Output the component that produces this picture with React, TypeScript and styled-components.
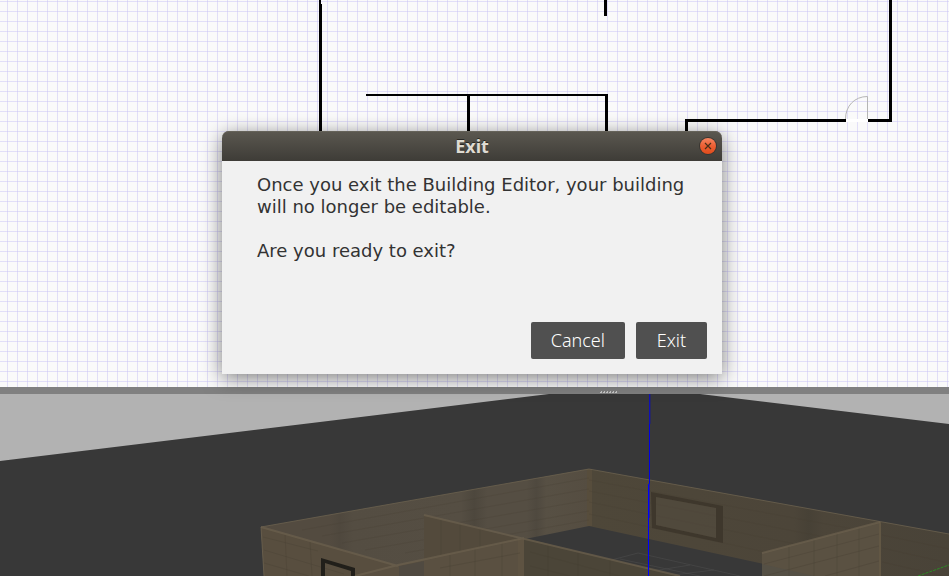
import React from "react";
import styled, { createGlobalStyle } from "styled-components";

const GlobalStyle = createGlobalStyle`
  * { box-sizing: border-box; }
  html, body, #root { height: 100%; margin: 0; }
  body { overflow: hidden; font-family: "DejaVu Sans", sans-serif; }
`;

const Editor = styled.main`
  position: relative;
  display: grid;
  grid-template-rows: minmax(0, 387fr) 7px minmax(0, 182fr);
  height: 100vh;
`;

const PlanPane = styled.section`
  min-height: 0;
  background-color: #fafafa;
  background-image:
    linear-gradient(to right, rgba(205, 200, 245, 0.55) 1px, transparent 1px),
    linear-gradient(to bottom, rgba(205, 200, 245, 0.55) 1px, transparent 1px);
  background-size: 10px 10px;
  background-position: 7px 1px;
`;

const ScenePane = styled.section`
  min-height: 0;
  background: #b2b2b2;
`;

const Drawing = styled.svg`
  display: block;
  width: 100%;
  height: 100%;
`;

const Splitter = styled.div`
  display: flex;
  align-items: flex-end;
  justify-content: center;
  padding: 0 0 1px 268px;
  background: #808080;
`;

const Grip = styled.svg`
  display: block;
  width: 18px;
  height: 2px;
`;

const Overlay = styled.div`
  position: absolute;
  inset: 0;
  display: flex;
  align-items: flex-start;
  justify-content: center;
  padding: 131px 5px 16px 0;
`;

const Dialog = styled.div`
  width: 100%;
  max-width: 500px;
  border-radius: 7px 7px 0 0;
  background: #f1f1f1;
  box-shadow: 0 4px 20px rgba(0, 0, 0, 0.5);
`;

const TitleBar = styled.header`
  display: grid;
  grid-template-columns: 1fr auto 1fr;
  align-items: center;
  height: 30px;
  padding: 0 5px;
  border-radius: 7px 7px 0 0;
  background: linear-gradient(#5b5850, #3e3c37);
  box-shadow: inset 0 1px #66635a;
`;

const Title = styled.h1`
  grid-column: 2;
  margin: 0;
  color: #dfdbd2;
  font: bold 18px/24px "Noto Sans", sans-serif;
  text-shadow: 0 -1px rgba(0, 0, 0, 0.5);
`;

const CloseButton = styled.button`
  justify-self: end;
  display: block;
  padding: 0;
  border: 0;
  background: none;
  line-height: 0;
`;

const Body = styled.div`
  padding: 13px 15px 15px 35px;
`;

const Message = styled.p`
  margin: 0 0 22px;
  max-width: 440px;
  color: #333;
  font-size: 18px;
  line-height: 22px;
`;

const Actions = styled.footer`
  display: flex;
  justify-content: flex-end;
  gap: 11px;
  padding-top: 38px;
`;

const ActionButton = styled.button`
  min-width: 71px;
  height: 37px;
  padding: 0 20px;
  border: 0;
  border-radius: 2px;
  background: #505050;
  color: #fff;
  font: 300 18px/37px "Noto Sans", sans-serif;
`;

function FloorPlan() {
  return (
    <Drawing viewBox="0 0 949 387" preserveAspectRatio="xMinYMin slice" aria-hidden="true">
      <path
        shapeRendering="crispEdges"
        d="M319 0h2v4h1v150h-3zM604 0h3v16h-3zM366 94h242v60h-3V96H470v58h-3V96H366zM889 0h3v122h-24v-3h21zM685 119h161v3H688v32h-3z"
      />
      <path d="M846 119h22v3h-22z" fill="#fff" />
      <path d="M845.500 119c0-13 9-22.500 22-22.500V119" fill="none" stroke="#b5b5b5" />
    </Drawing>
  );
}

function Scene() {
  return (
    <Drawing viewBox="0 394 949 182" preserveAspectRatio="xMinYMin slice" aria-hidden="true">
      <defs>
        <linearGradient id="back" x1="261" x2="589" y1="0" y2="0" gradientUnits="userSpaceOnUse">
          <stop offset="0" stopColor="#534b40" />
          <stop offset="0.21" stopColor="#534b40" />
          <stop offset="0.24" stopColor="#4f483e" />
          <stop offset="0.28" stopColor="#544d42" />
          <stop offset="0.61" stopColor="#554e43" />
          <stop offset="0.65" stopColor="#4d473d" />
          <stop offset="0.69" stopColor="#554e43" />
          <stop offset="0.81" stopColor="#554e43" />
          <stop offset="0.84" stopColor="#4f493f" />
          <stop offset="0.87" stopColor="#575044" />
          <stop offset="1" stopColor="#554d41" />
        </linearGradient>
        <linearGradient id="side" x1="589" x2="949" y1="0" y2="0" gradientUnits="userSpaceOnUse">
          <stop offset="0" stopColor="#4e4739" />
          <stop offset="0.57" stopColor="#4c4539" />
          <stop offset="0.61" stopColor="#474136" />
          <stop offset="0.65" stopColor="#4c4539" />
          <stop offset="1" stopColor="#494338" />
        </linearGradient>
      </defs>
      <path d="M0 461L320 422 549 394h151l249 30v152H0z" fill="#383838" />

      <path d="M261 527L589 469v57l-59 12-166 38H264z" fill="url(#back)" />
      <path d="M589 469L949 534v42H820L589 526z" fill="url(#side)" />
      <path d="M587 469h5v57h-5z" fill="#574d3c" />
      <g fill="none" stroke="#463f34" strokeOpacity="0.25">
        <path d="M302 530L589 478M322 536L589 489M342 543L589 500M365 550L589 511M405 553L589 520" />
        <path d="M589 480L880 534M589 491L850 542M589 502L800 545M589 514L770 553" />
      </g>

      <g fill="none" stroke="#525252" strokeOpacity="0.45">
        <path d="M600 563L638 553 740 576M576 566L632 576M620 559L700 576M622 576L690 565M665 576L714 570" />
      </g>

      <path d="M651 492L723 506v37l-71-15zM656 497v28l60 13v-30z" fill="#3e372c" fillRule="evenodd" />
      <path d="M656 497L716 508v30l-60-13z" fill="#554d40" fillOpacity="0.4" />

      <path d="M424 515L524 540v36H424z" fill="#534a3c" />
      <path d="M524 538L680 576H524z" fill="#4b4538" />
      <path d="M261 527L398 566v10H264z" fill="#584e3f" />
      <path d="M355 576L398 565 524 538v38z" fill="#5a5041" />
      <path d="M399 566l25-5v15h-25z" fill="#504a41" />
      <path d="M518 539h6v37h-6z" fill="#5e5342" />
      <g fill="none" stroke="#473f31" strokeOpacity="0.3">
        <path d="M285 534l2 42M310 541l2 35M441 520v35M460 524v27M480 529v18M450 555v21M475 549v27M502 543v33M548 545v31M578 552v24M610 560v16" />
        <path d="M263 537l55 14M264 550l80 24M264 563l45 13M440 568l80-15M530 552l90 24M530 566l40 10" />
      </g>
      <path d="M321 576V558l34 10v8h-4v-5l-26-8v13z" fill="#211f1a" />

      <path d="M762 553L880 522v54H762z" fill="#5a5142" />
      <path d="M762 564l52 12h-52z" fill="#525047" fillOpacity="0.7" />
      <g fill="none" stroke="#474034" strokeOpacity="0.35">
        <path d="M789 546v30M814 540v36M837 533v43M859 528v48M764 564l115-30M764 576l115-30M825 576l54-15M882 535l67 14M882 548l67 15M882 562l62 14" />
      </g>
      <path d="M880 522v54" stroke="#625744" strokeWidth="2" />

      <g fill="none" stroke="#6c614f">
        <path d="M261 527L589 469 949 534M261 527l3 49" strokeOpacity="0.8" />
        <path d="M261 527L398 566M355 576L398 565 524 538M424 515L680 576M762 553L880 522" strokeWidth="2" strokeOpacity="0.7" />
      </g>
      <g shapeRendering="crispEdges">
        <path d="M649 394h1v30h-1z" fill="#1010b8" />
        <path d="M650 394h1v30h-1z" fill="#29295e" />
        <path d="M649 424h1v60h-1z" fill="#0000e6" />
        <path d="M648 484h1v92h-1z" fill="#0000ff" />
        <path d="M649 484h1v34h-1z" fill="#2b2784" />
      </g>
      <path d="M918 576l31-11" stroke="#2c8a24" strokeDasharray="3 1" />
    </Drawing>
  );
}

export default function App() {
  return (
    <>
      <GlobalStyle />
      <Editor>
        <PlanPane aria-label="Floor plan">
          <FloorPlan />
        </PlanPane>
        <Splitter role="separator" aria-orientation="horizontal">
          <Grip viewBox="0 0 18 2" shapeRendering="crispEdges" aria-hidden="true">
            <path d="M1 0h1v2H0V1h1zM4 0h1v2H3V1h1zM7 0h1v2H6V1h1zM10 0h1v2H9V1h1zM13 0h1v2h-2V1h1zM16 0h1v2h-2V1h1z" fill="#c8c8c8" />
          </Grip>
        </Splitter>
        <ScenePane aria-label="3D view">
          <Scene />
        </ScenePane>
        <Overlay>
          <Dialog role="dialog" aria-modal="true" aria-labelledby="dialog-title">
            <TitleBar>
              <Title id="dialog-title">Exit</Title>
              <CloseButton type="button" aria-label="Close">
                <svg width="18" height="18" viewBox="0 0 18 18" aria-hidden="true">
                  <defs>
                    <linearGradient id="close" x1="0" x2="0" y1="0" y2="1">
                      <stop offset="0" stopColor="#f58662" />
                      <stop offset="0.5" stopColor="#ec5f33" />
                      <stop offset="1" stopColor="#e14c1c" />
                    </linearGradient>
                  </defs>
                  <circle cx="9" cy="9" r="9" fill="#393631" />
                  <circle cx="9" cy="9" r="8" fill="url(#close)" />
                  <path d="M6 6l6 6m0-6l-6 6" stroke="#4a2f18" strokeWidth="1.200" />
                </svg>
              </CloseButton>
            </TitleBar>
            <Body>
              <Message>Once you exit the Building Editor, your building will no longer be editable.</Message>
              <Message>Are you ready to exit?</Message>
              <Actions>
                <ActionButton type="button">Cancel</ActionButton>
                <ActionButton type="button">Exit</ActionButton>
              </Actions>
            </Body>
          </Dialog>
        </Overlay>
      </Editor>
    </>
  );
}
